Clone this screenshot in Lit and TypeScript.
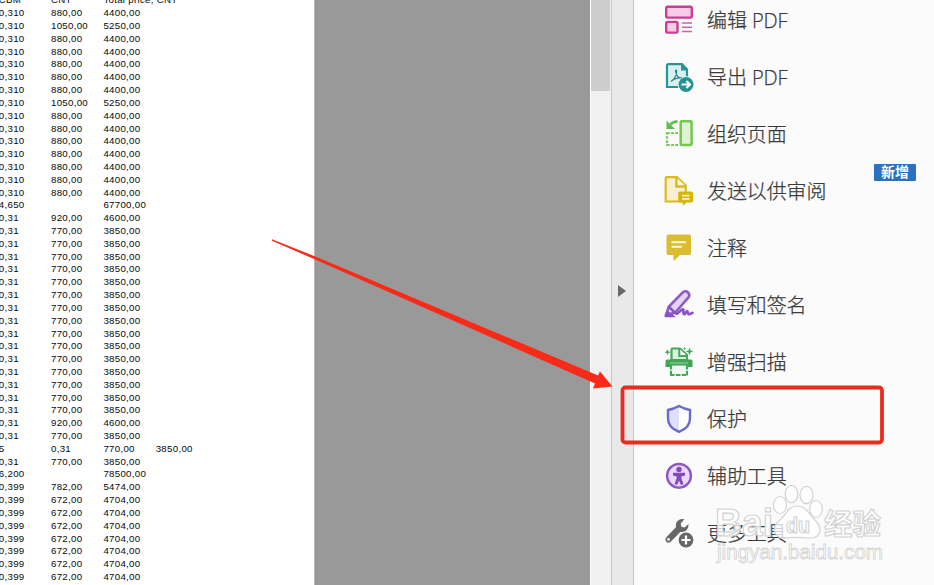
import { LitElement, html, css, svg } from "lit";
import { customElement } from "lit/decorators.js";

type Row = string[];
const repeat = (n: number, row: Row): Row[] => Array.from({ length: n }, () => row);

const rows: Row[] = [
  ["CBM", "CNT", "Total price, CNT"],
  ["0,310", "880,00", "4400,00"],
  ["0,310", "1050,00", "5250,00"],
  ...repeat(5, ["0,310", "880,00", "4400,00"]),
  ["0,310", "1050,00", "5250,00"],
  ...repeat(7, ["0,310", "880,00", "4400,00"]),
  ["4,650", "", "67700,00"],
  ["0,31", "920,00", "4600,00"],
  ...repeat(15, ["0,31", "770,00", "3850,00"]),
  ["0,31", "920,00", "4600,00"],
  ["0,31", "770,00", "3850,00"],
  ["5", "0,31", "770,00", "3850,00"],
  ["0,31", "770,00", "3850,00"],
  ["6,200", "", "78500,00"],
  ["0,399", "782,00", "5474,00"],
  ...repeat(7, ["0,399", "672,00", "4704,00"]),
];

const icons = {
  edit: svg`<g fill="#f7cbe6" stroke="#c93f92" stroke-width="2.400"><rect x="2.200" y="1.700" width="25.600" height="10.900" rx="1.300"/><rect x="2.200" y="16.900" width="11.300" height="10.700" rx="1.300"/></g>
    <path d="M18 18h10M18 22.300h10M18 26.500h10" stroke="#c766a0" stroke-width="1.500"/>`,
  exportPdf: svg`<path d="M4.200 2.200H18l5 5.300V25H3V3.400q0-1.200 1.200-1.200z" fill="#d9f0f0" stroke="#259595" stroke-width="2.200"/><path d="M17 2v6.500h6.500z" fill="#259595"/>
    <path d="M7 19.500c3.500-2 6-7 5.700-10.500-.2-1.600-1.500-1-1.100.7.8 3.800 3.500 6.700 6.300 7.400 1.600.2 1.300-1.400-.5-1.400-3.300 0-7.400 1.200-10.400 3.800z" fill="none" stroke="#29878a" stroke-width="1.200"/>
    <circle cx="22" cy="22.500" r="8.300" fill="#fbfbfb"/><circle cx="22" cy="22.500" r="7.500" fill="#219393"/><path d="M17.500 22.500h8M22.400 19l3.600 3.500-3.600 3.500" fill="none" stroke="#fff" stroke-width="2.100"/>`,
  organize: svg`<rect x="16.700" y="2.200" width="10.900" height="23.900" rx="1" fill="#dff3d4" stroke="#74c84f" stroke-width="2.500"/>
    <path d="M3 14h12M3 26h12M3 13v14" fill="none" stroke="#74c84f" stroke-width="2.200" stroke-dasharray="2.600 1.600"/>
    <path d="M13.500 2.600Q9 2.200 6.600 5.500" fill="none" stroke="#5dbe48" stroke-width="2.800"/><path d="M2.500 1.500v8.500H11z" fill="#5dbe48"/>`,
  send: svg`<path d="M2.700 1.200H13l8.800 8.600V25.500H1.700V2.200q0-1 1-1z" fill="#fbefd2" stroke="#d9ba22" stroke-width="2.200"/><path d="M12.400 1.500v9H22" fill="#fff8df" stroke="#d9ba22" stroke-width="2.400"/>
    <path d="M16 15.500h11.400q1.700 0 1.700 1.700v7.500q0 1.700-1.700 1.700h-5l-3.600 3.500v-3.500H16q-1.700 0-1.700-1.700v-7.500q0-1.700 1.700-1.700z" fill="#d7b600"/><path d="M18 19.600h7.500M18 22.900h7.500" stroke="#fff4ca" stroke-width="1.600"/>`,
  comment: svg`<path d="M4.500 1.500H25q2 0 2 2V20q0 2-2 2H16l-6.500 6.200V22h-5q-2 0-2-2V3.500q0-2 2-2z" fill="#d9bc32"/><path d="M7.500 9.300h14.300M7.500 13.700h10.300" stroke="#fff8d8" stroke-width="2"/>`,
  sign: svg`<path d="M1.700 25.600 5 16.500 19 2.200q2.600-2 5 .3t.3 5.100L11.300 22.500z" fill="#e5d3f8" stroke="#8d5cc0" stroke-width="2.600" stroke-linejoin="round"/><path d="m5 17 6 5.700q1.500 1.700 2.900.4L18 19.500q1.800-.9 1.500 1.400-.5 3.200.7 3.400 1.100.1 2.100-2.500 1.300-1.600 1.500.4.100 2.600 2.100 1.800l2.600-1.200" fill="none" stroke="#8951c5" stroke-width="2.500" stroke-linejoin="round" stroke-linecap="round"/><path d="M.5 27.200h11.300L8 23.700 3.500 21z" fill="#8951c5"/>`,
  scan: svg`<path d="M7.500 13V2.500q0-1 1-1h7.500l7 6.500v5z" fill="#ddf1df" stroke="#45a75a" stroke-width="2.200"/><path d="M15.300 1.500V9h7.800" fill="#fff" stroke="#45a75a" stroke-width="2"/>
    <path d="M3 12.500h24q1.500 0 1.500 1.500v6H1.500v-6q0-1.500 1.500-1.500z" fill="#3fa557"/><path d="M6 16h18" stroke="#87cc91" stroke-width="1.300"/><path d="M7 18.500h16v9.300H7z" fill="#f2fbf2"/><path d="M7 18v10M23 18v10M6 28h18" fill="none" stroke="#45a75a" stroke-width="2.200" stroke-dasharray="4.600 1.200"/>
    <path d="m25.500 .5 1.100 2.900 2.900 1.100-2.900 1.100-1.100 2.900-1.100-2.900-2.900-1.100 2.900-1.100zM3.500 2.200l.9 2.100 2.100.9-2.100.9-.9 2.100-.9-2.100-2.100-.9 2.100-.9zM20.500 0l.5 1.100 1.200.5-1.200.4-.5 1.200-.5-1.200-1.100-.4 1.100-.5z" fill="#45a75a"/>`,
  protect: svg`<path d="M15 2c3.500 2 6.800 3.200 11 4v8.600c0 6.500-4.500 10.900-11 13.300C8.500 25.500 4 21.100 4 14.600V6c4.200-.8 7.500-2 11-4z" fill="#fff"/><path d="M15 2.600v25C8.500 25.100 4 21.100 4 14.600V6c4.200-.8 7.500-2 11-3.400z" fill="#dfdff9"/><path d="M15 2c3.500 2 6.800 3.200 11 4v8.600c0 6.500-4.500 10.900-11 13.300C8.500 25.500 4 21.100 4 14.600V6c4.200-.8 7.500-2 11-4z" fill="none" stroke="#6b69cb" stroke-width="2.400"/>`,
  access: svg`<circle cx="15" cy="14.800" r="11.900" fill="#ead9fa" stroke="#8b58c4" stroke-width="2.500"/><circle cx="15" cy="8.400" r="2.700" fill="#8248be"/><path d="M9 11.800h12v2.800l-3.600.8v2l2 5.700-2.500.8-1.900-4.500-1.900 4.500-2.500-.8 2-5.700v-2l-3.600-.8z" fill="#8248be"/>`,
  more: svg`<path d="M20.400 1.300q-4-1.200-6.800 1.600-2.400 2.600-1.500 6.200L2.600 19q-2.400 2.500-.3 4.700t4.700-.3l9.500-9.700q3.700 1 6.300-1.700 2.300-2.400 1.600-6l-3.800 3.600-3.200-.8-.7-3.300z" fill="#676767"/><circle cx="4.500" cy="21.500" r="1.400" fill="#fbfbfb"/><circle cx="22" cy="22" r="8.500" fill="#fbfbfb"/><circle cx="22" cy="22" r="7.400" fill="#676767"/><path d="M17.500 22h9M22 17.500v9" stroke="#fff" stroke-width="2.200"/>`,
};

const tools: { label: string; icon: keyof typeof icons; badge?: string }[] = [
  { label: "编辑 PDF", icon: "edit" },
  { label: "导出 PDF", icon: "exportPdf" },
  { label: "组织页面", icon: "organize" },
  { label: "发送以供审阅", icon: "send", badge: "新增" },
  { label: "注释", icon: "comment" },
  { label: "填写和签名", icon: "sign" },
  { label: "增强扫描", icon: "scan" },
  { label: "保护", icon: "protect" },
  { label: "辅助工具", icon: "access" },
  { label: "更多工具", icon: "more" },
];

@customElement("app-root")
export class AppRoot extends LitElement {
  static styles = css`
    :host {
      display: flex;
      position: relative;
      width: 934px;
      height: 585px;
      overflow: hidden;
      background: #fbfbfb;
    }
    .page {
      box-sizing: border-box;
      width: 315px;
      flex: none;
      background: #fff;
      border-right: 1px solid #b5b5b5;
      overflow: hidden;
      font: 9.7px/12.82px "Liberation Sans", sans-serif;
      letter-spacing: 0.29px;
      color: #0a0a0a;
    }
    .sheet { margin: -5.600px 0 0 -1.200px; }
    .row {
      display: grid;
      grid-template-columns: 52.200px 52.400px 52.300px 1fr;
      height: 12.820px;
      white-space: nowrap;
    }
    .canvas { width: 275px; flex: none; background: #999; }
    .scroll {
      box-sizing: border-box;
      width: 21px;
      flex: none;
      background: #f0f0f0;
      border-left: 1px solid #fff;
    }
    .thumb { height: 91px; width: 19px; background: #cdcdcd; }
    .splitter {
      box-sizing: border-box;
      width: 23px;
      flex: none;
      display: flex;
      align-items: center;
      padding-left: 6px;
      background: #e9e9e9;
      border: solid #c8c8c8;
      border-width: 0 1px;
    }
    .caret {
      border-left: 8px solid #696969;
      border-top: 6.500px solid transparent;
      border-bottom: 6.500px solid transparent;
      margin-bottom: 3px;
    }
    .tools { flex: 1; padding-left: 30px; margin-top: -9px; }
    .tool { display: flex; align-items: center; height: 57px; }
    .icon { width: 30px; height: 30px; flex: none; }
    .label {
      margin: 2px 0 0 13px;
      font: 300 20px/30px "Open Sans", "Noto Sans CJK SC", sans-serif;
      letter-spacing: -0.1px;
      color: #3a3a3a;
      -webkit-text-stroke: 0.25px #3a3a3a;
      white-space: nowrap;
    }
    .badge {
      margin: 0 18px 37px auto;
      width: 42px;
      height: 17px;
      border-radius: 1px;
      background: #2d70bd;
      color: #fff;
      text-align: center;
      font: 700 14px/14px "Noto Sans CJK SC", sans-serif;
    }
    .overlay { position: absolute; left: 0; top: 0; }
    .brand { font: 700 38px "Liberation Sans", sans-serif; }
    .brand-cn { font: 700 29px "Noto Sans CJK SC", sans-serif; }
    .du { font: 700 22px "Liberation Sans", sans-serif; }
    .site { font: 400 20px "Liberation Sans", sans-serif; }
  `;

  render() {
    return html`
      <div class="page">
        <div class="sheet">
          ${rows.map((r) => html`<div class="row">${r.map((c) => html`<span>${c}</span>`)}</div>`)}
        </div>
      </div>
      <div class="canvas"></div>
      <div class="scroll"><div class="thumb"></div></div>
      <div class="splitter"><div class="caret"></div></div>
      <div class="tools">
        ${tools.map(
          (t) => html`<div class="tool">
            <svg class="icon" viewBox="0 0 30 30">${icons[t.icon]}</svg>
            <span class="label">${t.label}</span>
            ${t.badge ? html`<span class="badge">${t.badge}</span>` : null}
          </div>`,
        )}
      </div>
      <svg class="overlay" width="934" height="585" viewBox="0 0 934 585">
        <g fill="#fff" fill-opacity="0.75" stroke="#d3d3d3" stroke-width="1.200">
          <text class="brand" x="715" y="536" textLength="58" lengthAdjust="spacingAndGlyphs">Bai</text>
          <ellipse cx="780" cy="505" rx="6.500" ry="8.500"/>
          <ellipse cx="791.500" cy="494" rx="6.300" ry="8.700"/>
          <ellipse cx="806.500" cy="495" rx="6.500" ry="8.700"/>
          <ellipse cx="816" cy="509" rx="6.300" ry="8.500"/>
          <path d="M797 506c-9 0-11 9-17 14-10 8-5 19 5 18 8-1 15-1 23 0 12 1 16-9 7-18-6-6-9-14-18-14z"/>
          <text class="du" x="786" y="533" textLength="24" lengthAdjust="spacingAndGlyphs">du</text>
          <text class="brand-cn" x="824" y="535" textLength="57" lengthAdjust="spacingAndGlyphs">经验</text>
          <text class="site" x="717" y="559" textLength="166" lengthAdjust="spacingAndGlyphs" stroke-width="0.800">jingyan.baidu.com</text>
        </g>
        <path d="M272 239.300 316 256.800 598 375.500 600 371.500 612.500 386.500 593 388.500 595 383.500 314 259 272 240.800z" fill="#f92a18"/>
        <rect x="622.500" y="387.500" width="259.500" height="55" rx="3" fill="none" stroke="#e82c1f" stroke-width="3.800"/>
      </svg>
    `;
  }
}
